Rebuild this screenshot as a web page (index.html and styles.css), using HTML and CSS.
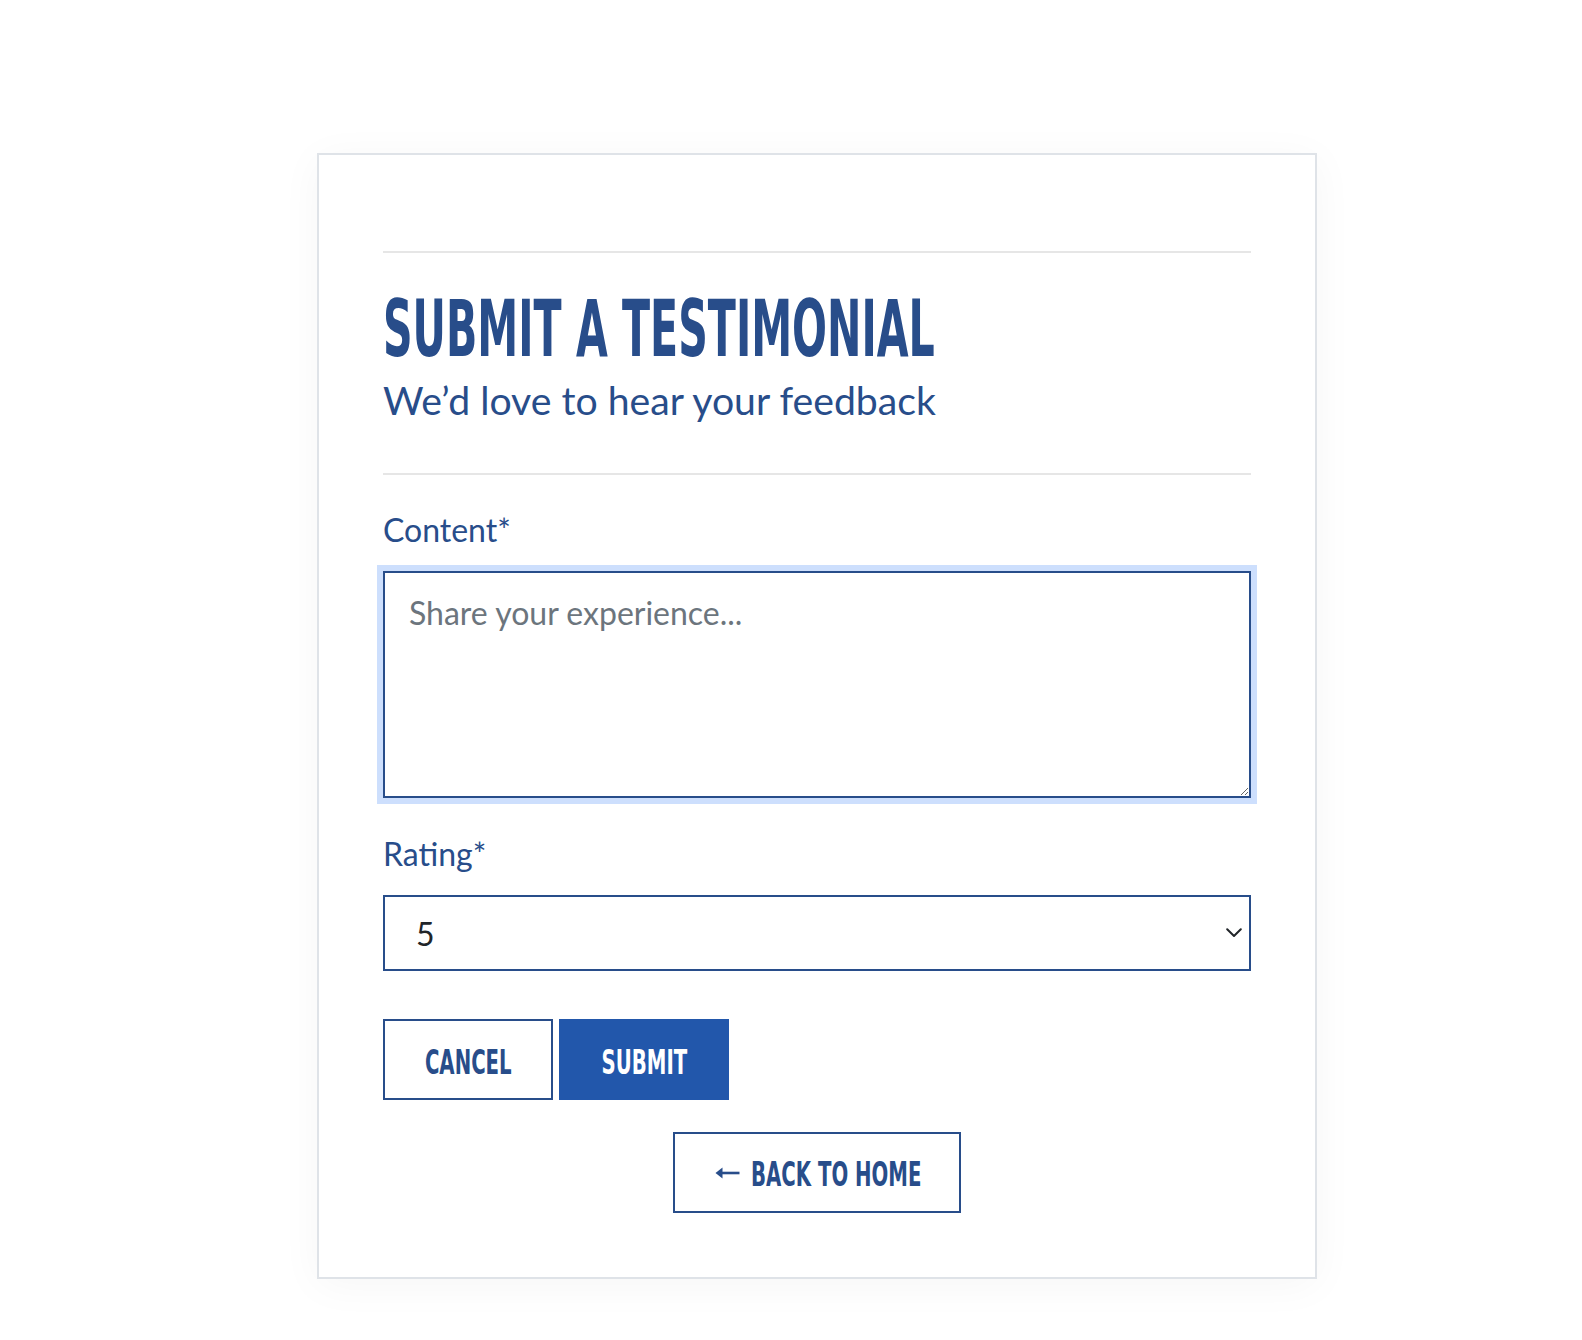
FILE: index.html
```html
<!DOCTYPE html>
<html lang="en">
<head>
<meta charset="utf-8">
<title>Submit a Testimonial</title>
<link rel="stylesheet" href="styles.css">
</head>
<body>
<main class="page">
  <section class="card">
    <hr class="rule">
    <header class="intro">
      <h1 class="title"><span class="cond cond-title">SUBMIT A TESTIMONIAL</span></h1>
      <p class="subtitle">We’d love to hear your feedback</p>
    </header>
    <hr class="rule">
    <form class="form">
      <label class="label" for="content">Content*</label>
      <textarea id="content" class="textarea" placeholder="Share your experience..." autofocus></textarea>
      <label class="label label-rating" for="rating">Rating*</label>
      <div class="select-wrap">
        <select id="rating" class="select">
          <option>5</option>
          <option>4</option>
          <option>3</option>
          <option>2</option>
          <option>1</option>
        </select>
        <svg class="chevron" width="16" height="10" viewBox="0 0 16 10"><path d="M1.2 1.2 L8 8 L14.8 1.2" fill="none" stroke="#212529" stroke-width="2" stroke-linecap="round" stroke-linejoin="round"/></svg>
      </div>
      <div class="actions">
        <button type="button" class="btn btn-outline"><span class="cond cond-btn">CANCEL</span></button>
        <button type="submit" class="btn btn-solid"><span class="cond cond-btn">SUBMIT</span></button>
      </div>
      <div class="back-row">
        <a class="btn btn-outline btn-back" href="#">
          <svg class="arrow" width="25" height="14" viewBox="0 0 25 14"><path d="M24.5 7 H5" stroke="#284d8a" stroke-width="2.6" fill="none"/><path d="M0.5 7 L7.5 1.5 L7.5 12.5 Z" fill="#284d8a"/></svg>
          <span class="fit"><span class="cond cond-back">BACK TO HOME</span></span>
        </a>
      </div>
    </form>
  </section>
</main>
</body>
</html>
```
FILE: styles.css
```css
* { box-sizing: border-box; }
html, body { margin: 0; padding: 0; background: #ffffff; }
body { font-family: Lato, "Noto Sans", sans-serif; color: #284d8a; }

.page { padding: 153px 0 60px 317px; }

.card {
  width: 1000px;
  border: 2px solid #dfe3e8;
  background: #fff;
  padding: 96px 64px 64px;
  box-shadow: 0 6px 40px rgba(0, 0, 0, 0.04);
}

.rule { margin: 0; border: 0; height: 2px; background: #e6e6e6; }

.intro { padding: 44px 0 49px; }

.cond {
  display: inline-block;
  font-family: "DejaVu Sans Condensed", "DejaVu Sans", sans-serif;
  font-weight: 700;
  white-space: nowrap;
}

.title {
  margin: 0;
  font-family: "DejaVu Sans Condensed", "DejaVu Sans", sans-serif;
  font-weight: 700;
  font-size: 78px;
  line-height: 64px;
  height: 64px;
  color: #284d8a;
  white-space: nowrap;
}
.cond-title { transform: scaleX(0.586); transform-origin: left center; }

.subtitle {
  margin: 15px 0 0;
  font-size: 39.2px;
  line-height: 48px;
  color: #284d8a;
  white-space: nowrap;
}

.form { display: flex; flex-direction: column; padding-top: 36px; }

.label { font-size: 32px; line-height: 38px; color: #284d8a; margin-bottom: 22px; }
.label-rating { margin-top: 37px; }

.textarea {
  display: block;
  width: 100%;
  height: 227px;
  border: 2px solid #284d8a;
  border-radius: 0;
  padding: 16px 24px;
  font-family: Lato, sans-serif;
  font-size: 32px;
  line-height: 48px;
  color: #212529;
  box-shadow: 0 0 0 6px #cddffd;
  outline: none;
  resize: vertical;
}
.textarea::placeholder { color: #6c757d; }

.select-wrap { position: relative; }
.select {
  display: block;
  width: 100%;
  height: 76px;
  border: 2px solid #284d8a;
  border-radius: 0;
  background: #fff;
  padding: 0 31px;
  font-family: Lato, sans-serif;
  font-size: 32px;
  color: #212529;
  appearance: none;
  -webkit-appearance: none;
  outline: none;
}
.chevron { position: absolute; right: 9px; top: 33px; pointer-events: none; }

.actions { display: flex; gap: 6px; margin-top: 48px; }

.btn {
  display: flex;
  align-items: center;
  justify-content: center;
  width: 170px;
  height: 81px;
  border: 2px solid #284d8a;
  border-radius: 0;
  background: #fff;
  color: #284d8a;
  font-family: "DejaVu Sans Condensed", "DejaVu Sans", sans-serif;
  font-size: 34px;
  text-decoration: none;
  padding: 5px 0 0;
}
.btn-solid { background: #2257ab; border-color: #2257ab; color: #fff; }
.cond-btn { transform: scaleX(0.645); transform-origin: center; }

.back-row { display: flex; justify-content: center; margin-top: 32px; }
.btn-back { width: 288px; gap: 11px; padding-top: 3px; }
.arrow { flex: none; margin-top: -3px; }
.fit { display: block; width: 168px; white-space: nowrap; }
.cond-back { transform: scaleX(0.645); transform-origin: left center; }
```
